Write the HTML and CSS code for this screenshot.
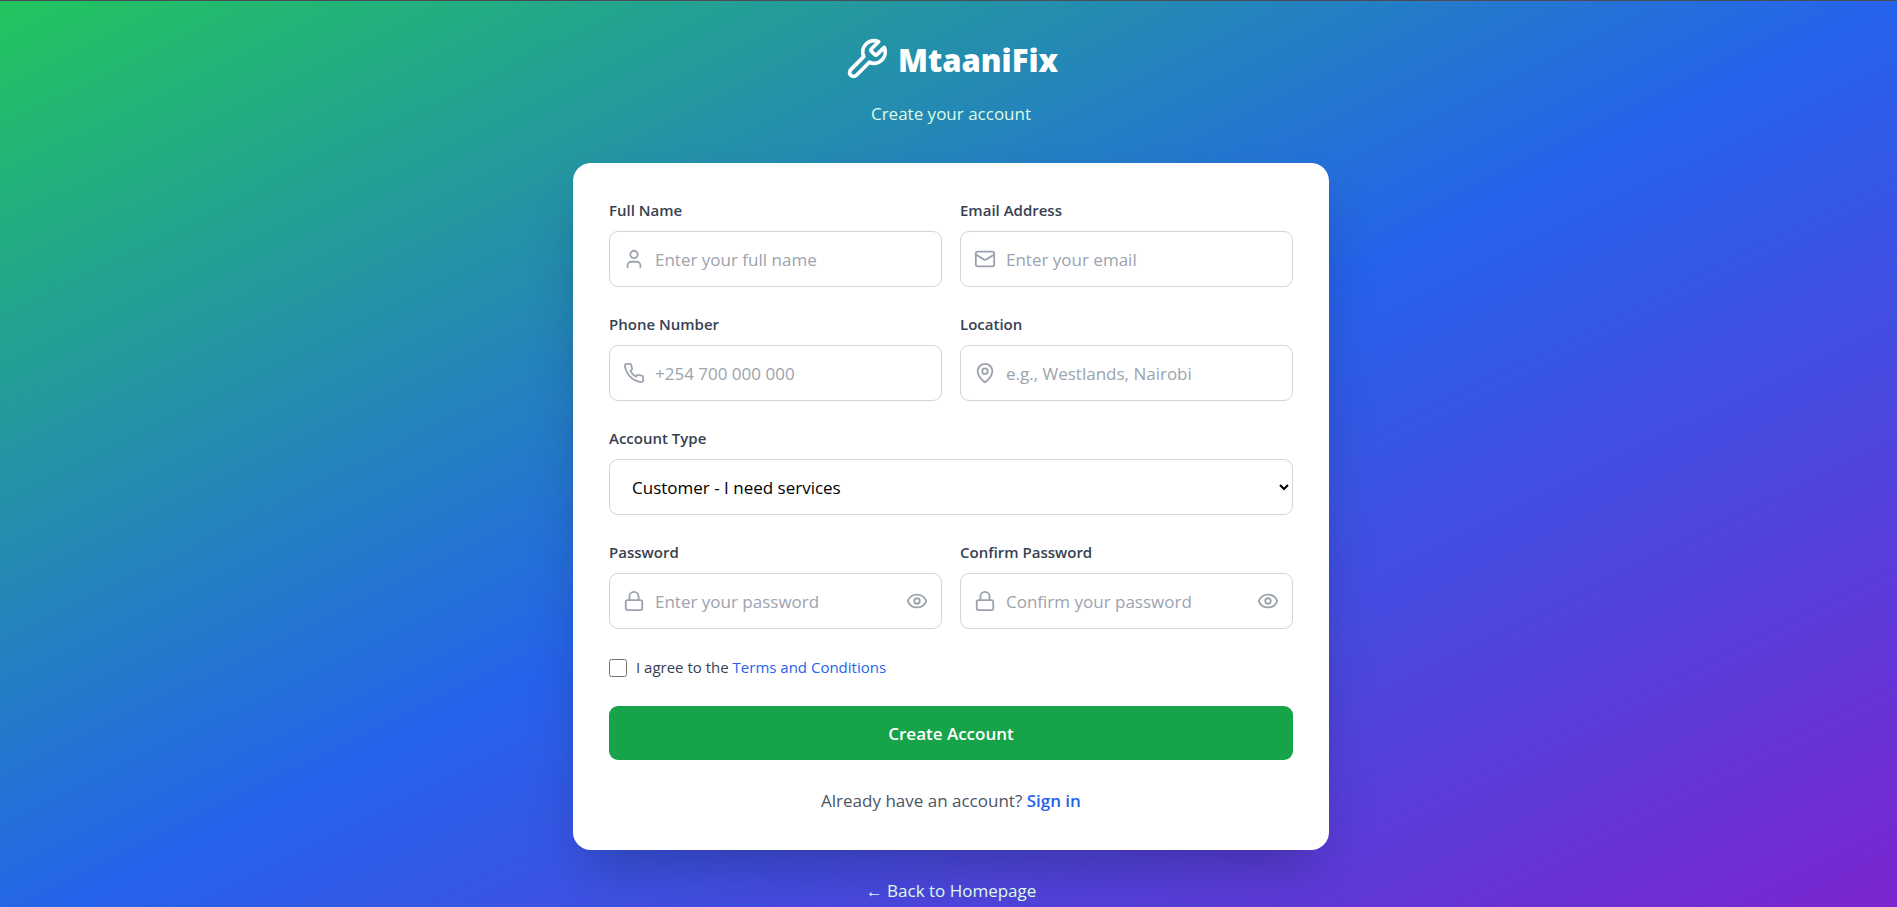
FILE: index.html
```html
<!DOCTYPE html>
<html lang="en">
<head>
<meta charset="utf-8">
<meta name="viewport" content="width=device-width, initial-scale=1">
<title>MtaaniFix - Create your account</title>
<link rel="stylesheet" href="styles.css">
</head>
<body>
<div class="page">
  <main class="container">
    <header class="header">
      <div class="brand">
        <svg class="brand-icon" viewBox="0 0 24 24" aria-hidden="true"><path d="M14.7 6.3a1 1 0 0 0 0 1.4l1.6 1.6a1 1 0 0 0 1.4 0l3.77-3.77a6 6 0 0 1-7.94 7.94l-6.91 6.91a2.12 2.12 0 0 1-3-3l6.91-6.91a6 6 0 0 1 7.94-7.94l-3.76 3.76z"/></svg>
        <h1 class="brand-name">MtaaniFix</h1>
      </div>
      <p class="subtitle">Create your account</p>
    </header>

    <div class="card">
      <form class="form">
        <div class="row">
          <div class="field">
            <label class="label" for="name">Full Name</label>
            <div class="control">
              <svg class="icon" viewBox="0 0 24 24" aria-hidden="true"><path d="M19 21v-2a4 4 0 0 0-4-4H9a4 4 0 0 0-4 4v2"/><circle cx="12" cy="7" r="4"/></svg>
              <input class="input" id="name" type="text" placeholder="Enter your full name">
            </div>
          </div>
          <div class="field">
            <label class="label" for="email">Email Address</label>
            <div class="control">
              <svg class="icon" viewBox="0 0 24 24" aria-hidden="true"><rect width="20" height="16" x="2" y="4" rx="2"/><path d="m22 7-8.97 5.7a1.94 1.94 0 0 1-2.06 0L2 7"/></svg>
              <input class="input" id="email" type="email" placeholder="Enter your email">
            </div>
          </div>
        </div>

        <div class="row">
          <div class="field">
            <label class="label" for="phone">Phone Number</label>
            <div class="control">
              <svg class="icon" viewBox="0 0 24 24" aria-hidden="true"><path d="M22 16.92v3a2 2 0 0 1-2.18 2 19.79 19.79 0 0 1-8.63-3.07 19.5 19.5 0 0 1-6-6 19.79 19.79 0 0 1-3.07-8.67A2 2 0 0 1 4.11 2h3a2 2 0 0 1 2 1.72 12.84 12.84 0 0 0 .7 2.81 2 2 0 0 1-.45 2.11L8.09 9.91a16 16 0 0 0 6 6l1.27-1.27a2 2 0 0 1 2.11-.45 12.84 12.84 0 0 0 2.81.7A2 2 0 0 1 22 16.92z"/></svg>
              <input class="input" id="phone" type="tel" placeholder="+254 700 000 000">
            </div>
          </div>
          <div class="field">
            <label class="label" for="location">Location</label>
            <div class="control">
              <svg class="icon" viewBox="0 0 24 24" aria-hidden="true"><path d="M20 10c0 4.993-5.539 10.193-7.399 11.799a1 1 0 0 1-1.202 0C9.539 20.193 4 14.993 4 10a8 8 0 0 1 16 0"/><circle cx="12" cy="10" r="3"/></svg>
              <input class="input" id="location" type="text" placeholder="e.g., Westlands, Nairobi">
            </div>
          </div>
        </div>

        <div class="field">
          <label class="label" for="type">Account Type</label>
          <select class="select" id="type">
            <option>Customer - I need services</option>
            <option>Provider - I offer services</option>
          </select>
        </div>

        <div class="row">
          <div class="field">
            <label class="label" for="password">Password</label>
            <div class="control">
              <svg class="icon" viewBox="0 0 24 24" aria-hidden="true"><rect width="18" height="11" x="3" y="11" rx="2"/><path d="M7 11V7a5 5 0 0 1 10 0v4"/></svg>
              <input class="input" id="password" type="password" placeholder="Enter your password">
              <button class="reveal" type="button" aria-label="Show password"><svg class="glyph" viewBox="0 0 24 24" aria-hidden="true"><path d="M2.062 12.348a1 1 0 0 1 0-.696 10.75 10.75 0 0 1 19.876 0 1 1 0 0 1 0 .696 10.75 10.75 0 0 1-19.876 0"/><circle cx="12" cy="12" r="3"/></svg></button>
            </div>
          </div>
          <div class="field">
            <label class="label" for="confirm">Confirm Password</label>
            <div class="control">
              <svg class="icon" viewBox="0 0 24 24" aria-hidden="true"><rect width="18" height="11" x="3" y="11" rx="2"/><path d="M7 11V7a5 5 0 0 1 10 0v4"/></svg>
              <input class="input" id="confirm" type="password" placeholder="Confirm your password">
              <button class="reveal" type="button" aria-label="Show confirmed password"><svg class="glyph" viewBox="0 0 24 24" aria-hidden="true"><path d="M2.062 12.348a1 1 0 0 1 0-.696 10.75 10.75 0 0 1 19.876 0 1 1 0 0 1 0 .696 10.75 10.75 0 0 1-19.876 0"/><circle cx="12" cy="12" r="3"/></svg></button>
            </div>
          </div>
        </div>

        <div class="terms">
          <input class="checkbox" id="terms" type="checkbox">
          <label for="terms">I agree to the <a class="link" href="#terms">Terms and Conditions</a></label>
        </div>

        <button class="submit" type="submit">Create Account</button>
      </form>
      <p class="signin">Already have an account? <a class="link strong" href="#signin">Sign in</a></p>
    </div>

    <p class="back"><a class="back-link" href="#home">← Back to Homepage</a></p>
  </main>
</div>
</body>
</html>
```
FILE: styles.css
```css
*, *::before, *::after {
  box-sizing: border-box;
}

body, h1, p {
  margin: 0;
}

body {
  font-family: "Segoe UI", "Open Sans", "Noto Sans", sans-serif;
  font-size: 17px;
  line-height: 27px;
}

.page {
  min-height: 100vh;
  display: flex;
  justify-content: center;
  align-items: center;
  padding: 36px 16px 36px 21px;
  border-top: 1px solid #4b4b55;
  background: linear-gradient(to bottom right, #22c55e, #2563eb, #7e22ce);
}

.container {
  width: 100%;
  max-width: 756px;
}

.header {
  margin-bottom: 36px;
  text-align: center;
}

.brand {
  display: flex;
  justify-content: center;
  align-items: center;
  gap: 9px;
  margin-bottom: 18px;
}

.brand-icon, .icon, .glyph {
  fill: none;
  stroke: currentColor;
  stroke-width: 2;
  stroke-linecap: round;
  stroke-linejoin: round;
}

.brand-icon {
  width: 45px;
  height: 45px;
  color: #fff;
}

.brand-name {
  color: #fff;
  font-size: 31px;
  line-height: 40px;
  font-weight: 800;
}

.subtitle {
  color: #dcfce7;
}

.card {
  padding: 36px;
  border-radius: 18px;
  background: #fff;
  box-shadow: 0 28px 56px -14px rgba(0, 0, 0, 0.25);
}

.form {
  display: flex;
  flex-direction: column;
  gap: 26px;
}

.row {
  display: grid;
  grid-template-columns: 1fr 1fr;
  gap: 18px;
}

.label {
  display: block;
  margin-bottom: 9px;
  color: #374151;
  font-size: 15px;
  line-height: 23px;
  font-weight: 600;
}

.control {
  position: relative;
}

.icon {
  position: absolute;
  top: 17px;
  left: 14px;
  width: 22px;
  height: 22px;
  color: #9ca3af;
  pointer-events: none;
}

.input, .select {
  display: block;
  width: 100%;
  height: 56px;
  border: 1px solid #d1d5db;
  border-radius: 9px;
  background: #fff;
  color: #000;
  font: inherit;
}

.input {
  padding: 0 45px;
}

.input::placeholder {
  color: #9ca3af;
  opacity: 1;
}

.select {
  padding: 0 0 0 18px;
}

.reveal {
  position: absolute;
  top: 17px;
  right: 14px;
  display: flex;
  padding: 0;
  border: 0;
  background: none;
  color: #9ca3af;
  cursor: pointer;
}

.glyph {
  width: 22px;
  height: 22px;
}

.terms {
  display: flex;
  align-items: center;
  gap: 9px;
  color: #374151;
  font-size: 15px;
  line-height: 25px;
}

.checkbox {
  width: 18px;
  height: 18px;
  margin: 0;
}

.link {
  color: #2563eb;
  text-decoration: none;
}

.strong {
  font-weight: 600;
}

.submit {
  height: 54px;
  border: 0;
  border-radius: 9px;
  background: #16a34a;
  color: #fff;
  font: inherit;
  font-weight: 600;
  cursor: pointer;
}

.signin {
  margin-top: 27px;
  color: #4b5563;
  text-align: center;
}

.back {
  margin-top: 27px;
  text-align: center;
}

.back-link {
  color: #dcfce7;
  text-decoration: none;
}
```
